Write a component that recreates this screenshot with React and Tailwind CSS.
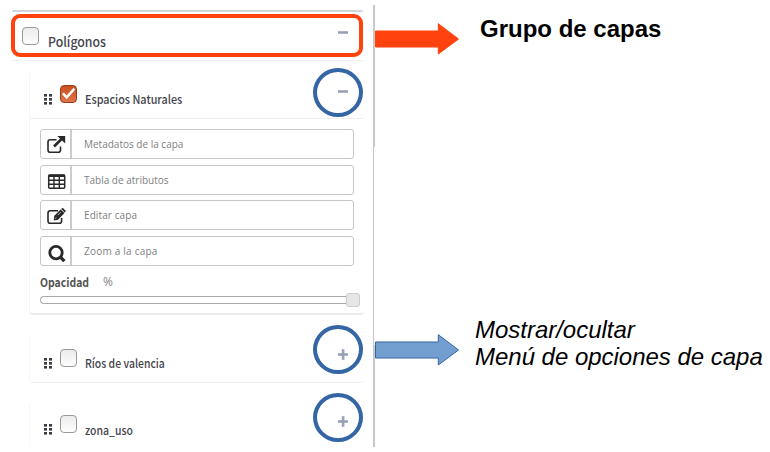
const UI = "font-['Noto_Sans_CJK_SC',sans-serif]";

function Checkbox({ checked, className = "" }) {
  return (
    <span
      className={`block h-[18px] w-[17px] shrink-0 rounded-[4px] border ${
        checked
          ? "border-[#963d1a] bg-linear-to-b from-[#c9501f] to-[#df7548]"
          : "border-[#999] bg-linear-to-b from-[#ececec] to-[#fdfdfd]"
      } ${className}`}
    >
      {checked && (
        <svg viewBox="0 0 15 16" className="h-4 w-[15px]" fill="none" stroke="#fff" strokeWidth="2.4">
          <path d="M1.8 7.4 L5.7 11.4 L13.4 2.6" />
        </svg>
      )}
    </span>
  );
}

function Grip() {
  return (
    <svg width="8" height="11" viewBox="0 0 8 11" fill="#3c3c44" className="shrink-0">
      {[0, 4, 8].map((y) => (
        <g key={y}>
          <rect x="0" y={y} width="3" height="2.6" />
          <rect x="5" y={y} width="3" height="2.6" />
        </g>
      ))}
    </svg>
  );
}

function Sign({ plus }) {
  return (
    <svg width="10" height="11" viewBox="0 0 10 11" fill="#99a1b6" className="block">
      <rect x="0" y="4.2" width="10" height="2.6" />
      {plus && <rect x="3.8" y="0.2" width="2.6" height="10.6" />}
    </svg>
  );
}

function Ring({ className }) {
  return <span className={`absolute right-px h-[49px] w-[50px] rounded-[50%] border-4 border-[#3465a4] ${className}`} />;
}

const icons = {
  link: (
    <>
      <path d="M10.5 4.8H4.2Q2 4.8 2 7V15Q2 17.3 4.2 17.3H12.2Q14.5 17.3 14.5 15V11.5" strokeWidth="1.6" />
      <path d="M8 11.5L15.5 4" strokeWidth="2.6" />
      <path d="M11.3 1H19.2V8.6Z" fill="#292929" stroke="none" />
    </>
  ),
  table: (
    <>
      <rect x="2.7" y="4" width="16" height="13.3" rx="1" strokeWidth="1.5" />
      <path d="M2.7 4.8H18.7" strokeWidth="2.4" />
      <path d="M2.7 9.3H18.7M2.7 13.3H18.7M8 4V17M13.3 4V17" strokeWidth="1.4" />
    </>
  ),
  edit: (
    <>
      <path d="M12 4.7H4.2Q2 4.7 2 7V15Q2 17.3 4.2 17.3H13.2Q15.6 17.3 15.6 15V12" strokeWidth="1.6" />
      <path d="M7.7 14.4L8.3 9.8L14.6 3.4L18.5 7L12 13.8Z" fill="#292929" stroke="none" />
      <path d="M15.2 2.9L16.7 1.7L19.9 4.9L18.8 6.5Z" fill="#292929" stroke="none" />
      <path d="M9.2 12.6L10.4 11.5M11.7 9.2L14.7 6.2" stroke="#fff" strokeWidth="0.7" />
    </>
  ),
  zoom: (
    <>
      <circle cx="10" cy="10.6" r="6.2" strokeWidth="2.8" />
      <path d="M14.2 14.9L18.4 19.2" strokeWidth="3.2" />
    </>
  ),
};

function Option({ icon, label, text = "", className = "" }) {
  return (
    <div className={`flex h-[30px] w-[314px] rounded-[3px] border border-[#c6c6c6] ${className}`}>
      <span className="flex w-[31px] shrink-0 justify-center border-r-2 border-[#cccccc] pt-[5px]">
        <svg width="20" height="20" viewBox="0 0 20 20" fill="none" stroke="#292929">
          {icons[icon]}
        </svg>
      </span>
      <span className={`pl-3 pt-[7px] font-['Open_Sans',sans-serif] text-[10px] leading-[15px] text-[#808080] ${text}`}>{label}</span>
    </div>
  );
}

function LayerHeader({ label, checked, plus, text, grip, box, sign, ring }) {
  return (
    <div className="relative flex h-[45px] pl-[14px]">
      <span className={grip}><Grip /></span>
      <Checkbox checked={checked} className={`ml-2 ${box}`} />
      <span className={`ml-2 origin-left whitespace-nowrap leading-4 font-medium text-[#44444c] ${UI} ${text}`}>{label}</span>
      <span className={`ml-auto mr-4 ${sign}`}><Sign plus={plus} /></span>
      <Ring className={ring} />
    </div>
  );
}

function Arrow({ fill, stroke, className }) {
  return (
    <svg width="84" height="32" viewBox="0 0 84 32" className={`shrink-0 ${className}`}>
      <path d="M0.5 8H63.3V0.7L83.5 16L63.3 31V24H0.5Z" fill={fill} stroke={stroke} strokeWidth="1" />
    </svg>
  );
}

export default function App() {
  return (
    <div className="flex h-[452px] w-[770px] overflow-hidden bg-white">
      <aside className="w-[373px] shrink-0 pt-[10px]">
        <div className="ml-[11px] w-[353px] border-b border-[#f0f0f0] pb-[3px]">
          <div className="mx-px h-[2px] rounded-t bg-[#d0d4de]" />
          <div className="mt-[2px] flex h-[43px] w-[352px] rounded-[9px] border-4 border-[#ff420e]">
            <Checkbox className="ml-[7px] mt-[9px]" />
            <span className={`ml-[9px] mt-[15px] origin-left scale-x-[0.91] text-[13.5px] leading-4 font-medium text-[#44444c] ${UI}`}>Polígonos</span>
            <span className="ml-auto mr-[11px] mt-[9px]"><Sign /></span>
          </div>
        </div>

        <section className="ml-[29px] mt-[12px] h-[242px] w-[335px] rounded-b-[4px] border-b-2 border-l border-b-[#ececec] border-l-[#f5f5f5]">
          <LayerHeader label="Espacios Naturales" checked grip="mt-[21px]" box="mt-[12px]" text="mt-[18px] text-[12px] scale-x-[0.9]" sign="mt-[13px]" ring="-top-[5px]" />
          <div className="border-t border-[#f0f0f0] pl-[10px] pt-[10px]">
            <Option icon="link" label="Metadatos de la capa" />
            <Option icon="table" label="Tabla de atributos" className="mt-[6px]" />
            <Option icon="edit" label="Editar capa" text="tracking-[0.1px]" className="mt-[5px]" />
            <Option icon="zoom" label="Zoom a la capa" text="tracking-[0.22px]" className="mt-[6px]" />
            <div className="mt-[8px] flex leading-4">
              <span className={`w-[49px] origin-left scale-x-[0.87] text-[12px] font-bold text-[#555] ${UI}`}>Opacidad</span>
              <span className="ml-[14px] font-['Open_Sans',sans-serif] text-[12px] text-[#858585]">%</span>
            </div>
            <div className="mt-[3px] flex items-center">
              <span className="h-2 w-[306px] rounded-l-[4px] border border-r-0 border-[#aaa]" />
              <span className="h-[14px] w-[14px] rounded-[3px] border border-[#cdcdcd] bg-[#e6e6e6]" />
            </div>
          </div>
        </section>

        <section className="ml-[29px] mt-[19px] h-[49px] w-[335px] rounded-[4px] border-b border-l border-b-[#efefef] border-l-[#f7f7f7]">
          <LayerHeader label="Ríos de valencia" plus grip="mt-[24px]" box="mt-[15px]" text="mt-[21px] text-[12px] scale-x-[0.87]" sign="mt-[15px]" ring="-top-[9px]" />
        </section>

        <section className="ml-[29px] mt-[19px] h-[45px] w-[335px] rounded-[4px] border-l border-l-[#f7f7f7]">
          <LayerHeader label="zona_uso" plus grip="mt-[22px]" box="mt-[13px]" text="mt-[20px] text-[11.5px] scale-x-[0.91]" sign="mt-[14px]" ring="-top-[9px]" />
        </section>
      </aside>

      <div className="mt-[5px] w-[2px] shrink-0">
        <div className="h-[142px] bg-[#c8c8c8]" />
        <div className="h-[198px] w-px bg-[#c8c8c8]" />
        <div className="h-[102px] bg-[#c8c8c8]" />
      </div>

      <main className="grow pt-[12px] font-['Liberation_Sans',sans-serif] text-black">
        <div className="flex h-[302px]">
          <Arrow fill="#ff420e" stroke="#ff420e" className="mt-[11px]" />
          <h1 className="ml-[21px] mt-[3px] whitespace-nowrap text-[24px] leading-7 font-bold">Grupo de capas</h1>
        </div>
        <div className="flex">
          <Arrow fill="#729fcf" stroke="#3465a4" className="mt-[20px]" />
          <p className="ml-[16px] mt-[2px] whitespace-nowrap text-[24px] leading-[27px] tracking-[-0.02px] italic">
            Mostrar/ocultar
            <br />
            Menú de opciones de capa
          </p>
        </div>
      </main>
    </div>
  );
}
